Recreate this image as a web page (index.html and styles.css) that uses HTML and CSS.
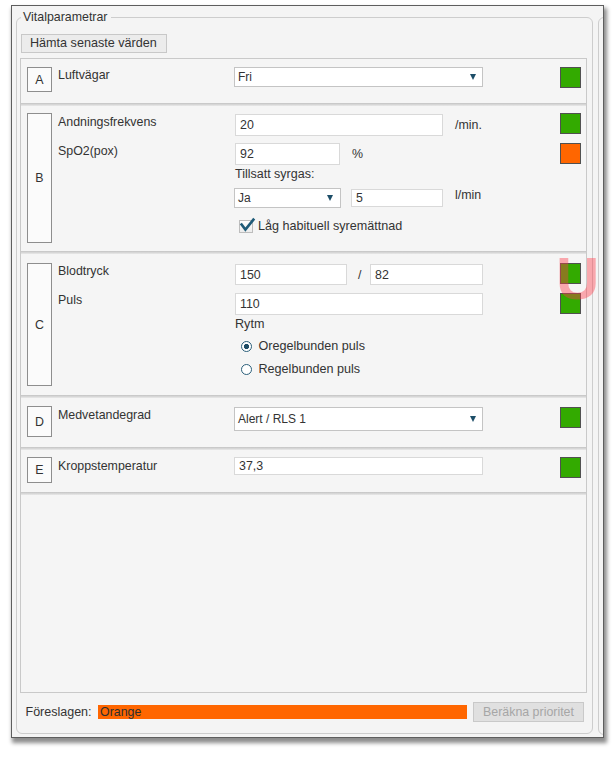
FILE: index.html
```html
<!DOCTYPE html>
<html lang="sv">
<head>
<meta charset="utf-8">
<title>Vitalparametrar</title>
<link rel="stylesheet" href="styles.css">
</head>
<body>
<div class="frame">
<div class="window">
  <fieldset class="group">
    <legend class="group-title">Vitalparametrar</legend>
    <button class="btn btn-fetch" type="button">Hämta senaste värden</button>
    <div class="panel">
      <section class="row row-a">
        <div class="letter letter-a">A</div>
        <div class="body">
          <div class="label lbl-a">Luftvägar</div>
          <div class="ctrl">
            <div class="select sel-full sel-a"><span>Fri</span><i class="arrow"></i></div>
          </div>
          <div class="status green"></div>
        </div>
      </section>

      <section class="row row-b">
        <div class="letter letter-b">B</div>
        <div class="body">
          <div class="label lbl-b1">Andningsfrekvens</div>
          <div class="ctrl ctrl-b1">
            <input class="field w208 h22" type="text" value="20">
            <span class="unit">/min.</span>
          </div>
          <div class="status green"></div>

          <div class="label lbl-b2">SpO2(pox)</div>
          <div class="ctrl ctrl-b2">
            <input class="field w105 h22" type="text" value="92">
            <span class="unit">%</span>
          </div>
          <div class="status orange st-b2"></div>

          <div class="ctrl col2 sub-b3">Tillsatt syrgas:</div>

          <div class="ctrl col2 sub-b4">
            <div class="select sel-ja"><span>Ja</span><i class="arrow"></i></div>
            <input class="field w92 h18 f-five" type="text" value="5">
            <span class="unit unit-top">l/min</span>
          </div>

          <label class="ctrl col2 sub-b5 check-line">
            <span class="checkbox"><svg viewBox="0 0 18 17" width="18" height="17"><path d="M3.6 7.6 L7.4 12.6 L15.4 2.6" fill="none" stroke="#1f5b78" stroke-width="2.6" stroke-linecap="square" stroke-linejoin="miter"/></svg></span>
            <span class="opt-text">Låg habituell syremättnad</span>
          </label>
        </div>
      </section>

      <section class="row row-c">
        <div class="letter letter-c">C</div>
        <div class="body">
          <div class="label lbl-c1">Blodtryck</div>
          <div class="ctrl ctrl-c1">
            <input class="field w112 h21" type="text" value="150">
            <span class="slash">/</span>
            <input class="field w113 h21" type="text" value="82">
          </div>
          <div class="status green"></div>

          <div class="label lbl-c2">Puls</div>
          <div class="ctrl ctrl-c2">
            <input class="field w248 h22" type="text" value="110">
          </div>
          <div class="status green st-c2"></div>

          <div class="ctrl col2 sub-c3">Rytm</div>

          <label class="ctrl col2 sub-c4 radio-line">
            <span class="radio checked"></span>
            <span class="opt-text">Oregelbunden puls</span>
          </label>
          <label class="ctrl col2 sub-c5 radio-line">
            <span class="radio"></span>
            <span class="opt-text">Regelbunden puls</span>
          </label>
        </div>
      </section>

      <section class="row row-d">
        <div class="letter letter-d">D</div>
        <div class="body">
          <div class="label lbl-d">Medvetandegrad</div>
          <div class="ctrl ctrl-d">
            <div class="select sel-full sel-d"><span>Alert / RLS 1</span><i class="arrow"></i></div>
          </div>
          <div class="status green st-d"></div>
        </div>
      </section>

      <section class="row row-e">
        <div class="letter letter-e">E</div>
        <div class="body">
          <div class="label lbl-e">Kroppstemperatur</div>
          <div class="ctrl ctrl-e">
            <input class="field w249 h18" type="text" value="37,3">
          </div>
          <div class="status green"></div>
        </div>
      </section>
    </div>

    <div class="footer">
      <span class="footer-label">Föreslagen:</span>
      <div class="priority-bar">Orange</div>
      <button class="btn btn-calc" type="button" disabled>Beräkna prioritet</button>
    </div>
  </fieldset>

  <div class="side-group"></div>

  <div class="watermark">U</div>
</div>
</div>
</body>
</html>
```

FILE: styles.css
```css
* { box-sizing: border-box; }

html, body {
  margin: 0;
  background: #ffffff;
}

body {
  font-family: "Liberation Sans", Arial, sans-serif;
  font-size: 12.4px;
  line-height: 14px;
  color: #333333;
}

.frame {
  width: 616px;
  height: 757px;
  padding: 5px 0 0 11px;
}

.window {
  position: relative;
  display: flex;
  align-items: flex-start;
  gap: 5px;
  width: 593px;
  height: 733px;
  padding: 4px 0 0 4px;
  border: 1px solid #5e5e5e;
  background: #f4f4f4;
  box-shadow: 2px 4px 4px 1px rgba(0, 0, 0, 0.45);
  overflow: hidden;
}

.group {
  flex: 0 0 577px;
  min-width: 0;
  margin: 0;
  padding: 0 5px 11px 4px;
  border: 1px solid #cdcdcd;
  border-radius: 6px;
}

.group-title {
  padding: 0 4px 0 2px;
  font-size: 12.4px;
  line-height: 14px;
  color: #333333;
}

.side-group {
  flex: 0 0 200px;
  margin-top: 7px;
  height: 718px;
  border: 1px solid #cdcdcd;
  border-radius: 6px;
}

.btn {
  display: block;
  margin: 0;
  font-family: inherit;
}

.btn-fetch {
  margin-top: 10px;
  width: 146px;
  height: 19px;
  padding: 0 0 0 8px;
  text-align: left;
  border: 1px solid #c8c8c8;
  background: #ececec;
  color: #333333;
  font-size: 12.6px;
  line-height: 17px;
}

.panel {
  margin: 5px 0 0 -1px;
  height: 635px;
  border: 1px solid #c9c9c9;
  background: #f5f5f5;
}

.row {
  display: flex;
  align-items: flex-start;
  padding: 8px 0 0 6px;
  background: linear-gradient(to bottom, #f5f5f5 calc(100% - 3px), #c3c3c3 calc(100% - 3px), #e9e9e9 100%);
}

.row-a { height: 47px; }
.row-b { height: 148px; padding-top: 7px; }
.row-c { height: 144px; padding-top: 9px; }
.row-d { height: 52px; }
.row-e { height: 45px; padding-top: 7px; }

.letter {
  flex: 0 0 25px;
  display: flex;
  align-items: center;
  justify-content: center;
  border: 1px solid #8e8e8e;
  background: #fbfbfb;
  color: #333333;
}

.letter-a { height: 25px; }
.letter-b { height: 130px; }
.letter-c { height: 123px; }
.letter-d { height: 31px; }
.letter-e { height: 26px; }

.body {
  margin-left: 6px;
  display: grid;
  grid-template-columns: 176px 326px 21px;
  align-items: start;
}

.label { grid-column: 1; }
.ctrl {
  grid-column: 2;
  display: flex;
  align-items: center;
}
.col2 { grid-column: 2; }

.status {
  grid-column: 3;
  width: 21px;
  height: 21px;
  border: 1px solid #505050;
}
.green { background: #33aa00; }
.orange { background: #ff6600; }

.field {
  margin: 0;
  padding: 0 0 0 4px;
  border: 1px solid #d9d9d9;
  background: #ffffff;
  color: #333333;
  font-family: inherit;
  font-size: 12.4px;
  outline: none;
}
.w92 { width: 92px; }
.w105 { width: 105px; }
.w112 { width: 112px; }
.w113 { width: 113px; }
.w208 { width: 208px; }
.w248 { width: 248px; }
.w249 { width: 249px; }
.h18 { height: 18px; }
.h21 { height: 21px; }
.h22 { height: 22px; }

/* Row A */
.lbl-a { margin-top: 0.7px; }

/* Row B */
.lbl-b1 { margin-top: 1.5px; }
.ctrl-b1 { margin-top: 1px; padding-left: 1px; }
.lbl-b2 { margin-top: 8px; }
.ctrl-b2 { margin-top: 7px; padding-left: 1px; }
.st-b2 { margin-top: 7px; }
.sub-b3 { margin-top: 2px; padding-left: 1px; font-size: 12.5px; }
.sub-b4 { margin-top: 7px; align-items: flex-start; }
.field.f-five { margin-left: 10px; margin-top: 1px; }
.unit-top { margin-top: 0; }
.sub-b5 { margin-top: 11px; }

/* Row C */
.lbl-c1 { margin-top: 0.7px; }
.ctrl-c1 { margin-top: 1px; padding-left: 1px; }
.lbl-c2 { margin-top: 8px; }
.ctrl-c2 { margin-top: 8px; padding-left: 1px; }
.st-c2 { margin-top: 8px; }
.sub-c3 { margin-top: 2px; padding-left: 1px; font-size: 12.6px; }
.sub-c4 { margin-top: 8px; }
.sub-c5 { margin-top: 9px; }

/* Row D */
.lbl-d { margin-top: 2px; }
.ctrl-d { margin-top: 1px; }
.st-d { margin-top: 1px; }

/* Row E */
.lbl-e { margin-top: 1.7px; }

.unit { margin-left: 12px; }
.slash { margin-left: 11px; margin-right: 8.6px; }

.select {
  display: flex;
  align-items: center;
  justify-content: space-between;
  padding: 0 6px 0 3px;
  border: 1px solid #c4c4c4;
  background: #ffffff;
  font-size: 12px;
  color: #333333;
}
.sel-full { width: 249px; height: 20px; }
.sel-d { height: 24px; }
.sel-ja { width: 107px; height: 20px; padding-right: 7px; }

.arrow {
  width: 0;
  height: 0;
  border-left: 3.5px solid transparent;
  border-right: 3.5px solid transparent;
  border-top: 6px solid #1d4e68;
}

.check-line,
.radio-line {
  align-items: center;
  height: 14px;
}

.checkbox {
  position: relative;
  flex: 0 0 14px;
  width: 14px;
  height: 13px;
  margin-left: 5px;
  margin-right: 5px;
  border: 1px solid #bdbdbd;
  background: linear-gradient(#ffffff, #ececec);
}
.checkbox svg {
  position: absolute;
  left: -2px;
  top: -4px;
}

.opt-text { font-size: 12.6px; }

.radio {
  flex: 0 0 11px;
  width: 11px;
  height: 11px;
  margin-left: 6.5px;
  margin-right: 7px;
  border: 1.6px solid #2b5f7a;
  border-radius: 50%;
  background: #ffffff;
}
.radio.checked {
  background: radial-gradient(circle, #1f4d66 0 2.4px, #ffffff 2.9px);
}

.footer {
  display: flex;
  align-items: center;
  height: 20px;
  margin-top: 9px;
  padding: 0 3px 0 4.5px;
}
.footer-label { font-size: 12.5px; }

.priority-bar {
  flex: 1;
  height: 14px;
  margin-left: 6.5px;
  padding-left: 2px;
  background: #ff6600;
  color: #2e2e2e;
  font-size: 12.4px;
  line-height: 14px;
}

.btn-calc {
  width: 111px;
  height: 20px;
  margin-left: 6px;
  padding: 0;
  border: 1px solid #c9c9c9;
  background: #e0e0e0;
  color: #a6a6a6;
  font-size: 12.4px;
  line-height: 18px;
  text-align: center;
}

.watermark {
  position: absolute;
  left: 544px;
  top: 243px;
  font-family: "Liberation Sans", Arial, sans-serif;
  font-weight: bold;
  font-size: 60px;
  line-height: 60px;
  color: rgba(255, 60, 75, 0.42);
  white-space: nowrap;
  pointer-events: none;
}
```
